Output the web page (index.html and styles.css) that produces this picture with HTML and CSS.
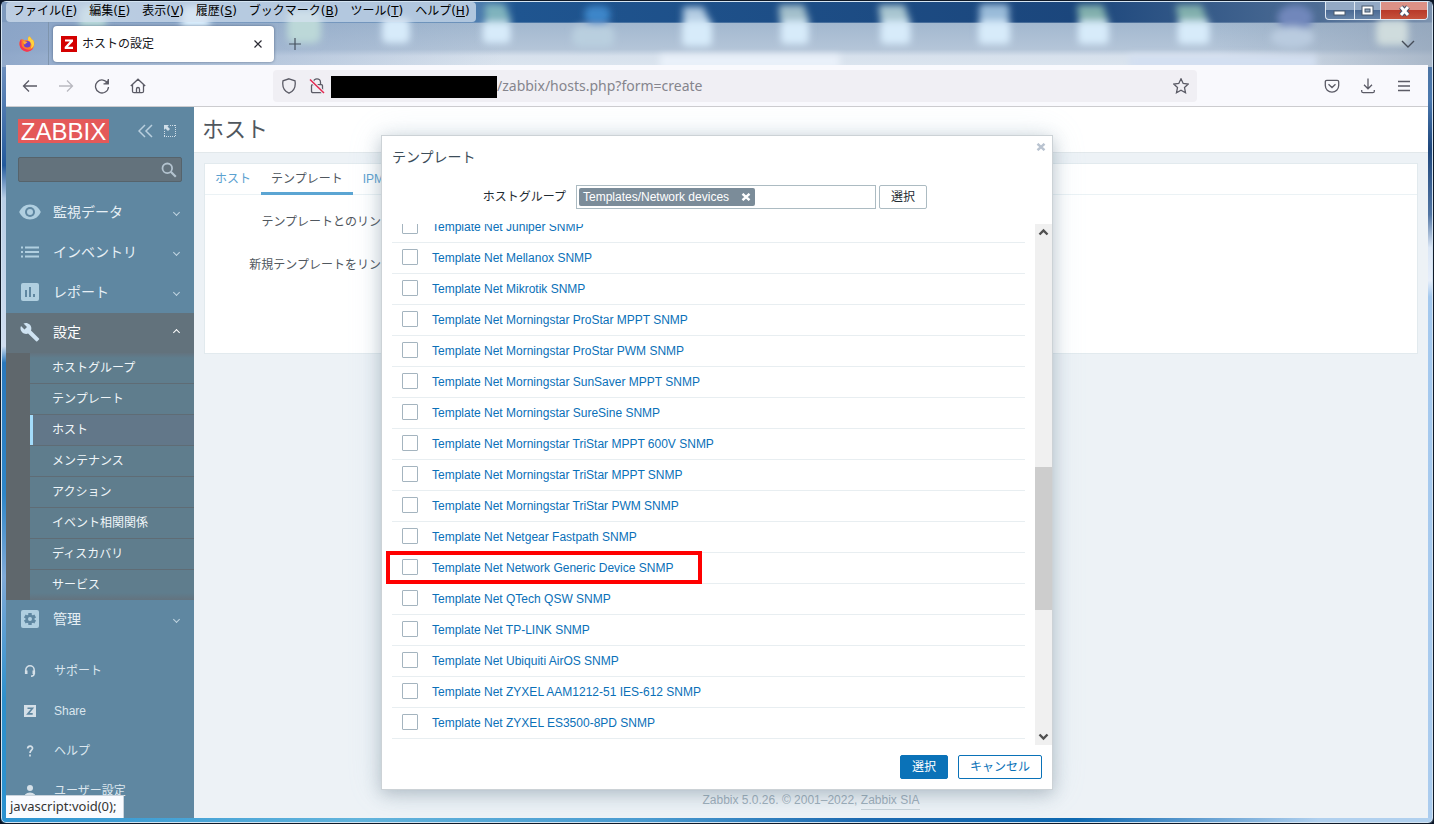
FILE: index.html
```html
<!DOCTYPE html>
<html lang="ja">
<head>
<meta charset="utf-8">
<title>ホストの設定</title>
<link rel="stylesheet" href="styles.css">
</head>
<body>
<div class="window">
  <svg class="wallpaper" viewBox="0 0 1434 66" preserveAspectRatio="none" aria-hidden="true">
    <defs>
      <filter id="soft" x="-50%" y="-50%" width="200%" height="200%"><feGaussianBlur stdDeviation="4"/></filter>
      <linearGradient id="sky" x1="0" x2="1"><stop offset="0" stop-color="#7d99bd"/><stop offset=".33" stop-color="#4f7eb0"/><stop offset=".36" stop-color="#1f5590"/><stop offset=".75" stop-color="#1b467c"/><stop offset=".92" stop-color="#4d6c94"/><stop offset="1" stop-color="#7c92ae"/></linearGradient>
      <linearGradient id="veil" x1="0" x2="0" y1="0" y2="1"><stop offset="0" stop-color="#a2b8cf"/><stop offset=".6" stop-color="#b4c5d8"/><stop offset=".75" stop-color="#d6e0ec"/><stop offset="1" stop-color="#dce5ef"/></linearGradient>
      <linearGradient id="edge" x1="0" x2="1"><stop offset="0" stop-color="#88a2c6" stop-opacity=".9"/><stop offset=".35" stop-color="#88a2c6" stop-opacity="0"/><stop offset=".85" stop-color="#8c9db2" stop-opacity="0"/><stop offset="1" stop-color="#8c9db2" stop-opacity=".6"/></linearGradient>
    </defs>
    <rect width="1434" height="66" fill="url(#sky)"/>
    <rect y="21" width="1434" height="45" fill="url(#veil)"/>
    <rect y="21" width="1434" height="45" fill="url(#edge)"/>
    <g filter="url(#soft)" fill="#d7ebfa">
      <rect x="78" y="4" width="26" height="34" rx="8" fill="#b5d5d8"/><rect x="180" y="4" width="28" height="36" rx="8"/><rect x="286" y="8" width="34" height="34" rx="8" fill="#bcd8d8"/><rect x="381" y="16" width="28" height="26" rx="6"/>
      <path d="M484 2h20l7 18h-27z" fill="#7fb3bd"/><rect x="482" y="20" width="28" height="22" rx="5"/>
      <rect x="584" y="4" width="26" height="18" rx="8" fill="#3d86c9"/><rect x="572" y="24" width="42" height="22" rx="8" fill="#b9cfdf"/>
      <path d="M683 5h20l8 17h-28z" fill="#b3cce2"/><rect x="682" y="19" width="30" height="26" rx="5"/>
      <path d="M779 3h25l6 18h-30z" fill="#a3bfcb"/><rect x="781" y="19" width="28" height="24" rx="5"/>
      <path d="M879 3h26l6 18h-30z" fill="#a9c6d0"/><rect x="881" y="19" width="30" height="24" rx="5"/>
      <rect x="980" y="2" width="30" height="20" rx="4" fill="#9abbd9"/><rect x="979" y="19" width="32" height="24" rx="5"/>
      <path d="M1078 3h26l6 18h-30z" fill="#82b0ad"/><rect x="1079" y="19" width="31" height="24" rx="5"/>
      <path d="M1177 3h26l7 18h-30z" fill="#82b0ad"/><rect x="1179" y="19" width="32" height="24" rx="5"/>
      <ellipse cx="1297" cy="16" rx="18" ry="13" fill="#7187bb"/><ellipse cx="1294" cy="36" rx="22" ry="11" fill="#b9cbdf"/>
      <rect x="1378" y="18" width="32" height="26" rx="6" fill="#cfdcdd"/>
      <rect x="660" y="54" width="180" height="14" fill="#eaf1fa"/><rect x="1130" y="54" width="188" height="14" fill="#d3dff1"/>
    </g>
  </svg>

  <div class="titlebar">
    <nav class="menubar" aria-label="メニュー">
      <a href="#">ファイル(<u>F</u>)</a><a href="#">編集(<u>E</u>)</a><a href="#">表示(<u>V</u>)</a><a href="#">履歴(<u>S</u>)</a><a href="#">ブックマーク(<u>B</u>)</a><a href="#">ツール(<u>T</u>)</a><a href="#">ヘルプ(<u>H</u>)</a>
    </nav>
    <div class="winctl">
      <button aria-label="最小化"><svg width="28" height="18"><rect x="8" y="9" width="11" height="4" fill="#fff" stroke="#4a5a6c"/></svg></button>
      <button aria-label="最大化"><svg width="25" height="18"><rect x="7" y="4" width="11" height="9" fill="#fff" stroke="#44566b"/><rect x="10" y="7" width="5" height="3" fill="#8fa4bc" stroke="#44566b"/></svg></button>
      <button class="winclose" aria-label="閉じる"><svg width="46" height="18"><path d="M20 5l7 8m0-8l-7 8" stroke="#45526a" stroke-width="5"/><path d="M20 5l7 8m0-8l-7 8" stroke="#fff" stroke-width="3"/></svg></button>
    </div>
  </div>

  <div class="tabstrip">
    <button class="pinned" aria-label="Firefox">
      <svg width="16" height="16" viewBox="0 0 16 16"><path d="M10 .3c1.700 1 2.600 2.300 3 3.700l.8-.4c1 1.400 1.700 3 1.500 5A7.500 7.500 0 0 1 8 15.700 7.500 7.500 0 0 1 .5 8.500C.4 6 1.200 4 2.300 3l.3 1.200L4 2.700c.3 1 .8 1.500 1.700 1.700 1.200-.9 3.100-.4 3.600.4C8.700 3 9 1.500 10 .3z" fill="#ff7a2a"/><path d="M10 .3c1.700 1 2.600 2.300 3 3.700l.8-.4c1 1.400 1.600 3.600 1.100 5.600-.6 1.700-1.700 2.800-3.200 3.300 1.700-3.200.5-6.400-2.400-7.700C8.700 3 9 1.500 10 .3z" fill="#ffd43c"/><path d="M.5 8.500A7.500 7.500 0 0 0 8 15.700c3 0 5.500-1.700 6.600-4.100-2 2.400-5.600 2.900-8 1.500C3.500 12 2 9.600 2.600 5.500L2.300 3C1 4.200.4 6 .5 8.500z" fill="#f0365a"/><circle cx="8.200" cy="8.300" r="3.300" fill="#6b3fd0"/><path d="M4 5.500c1.500-.6 2.500 0 4.500.4-.3 1-1.800 1-2 1.800-.2 1.300-1 1-1.500.1z" fill="#ffad33"/></svg>
    </button>
    <div class="tab">
      <svg width="16" height="16"><rect width="16" height="16" fill="#d40000"/><path d="M4 3.500h8v2L7 10.800h5v2.200H3.700v-2L8.800 5.600H4z" fill="#fff"/></svg>
      <span class="tabname">ホストの設定</span>
      <button aria-label="タブを閉じる"><svg width="8" height="8"><path d="M.5.5l7 7m0-7l-7 7" stroke="#2b2a33" stroke-width="1.200"/></svg></button>
    </div>
    <button class="newtab" aria-label="新しいタブ"><svg width="12" height="12"><path d="M6 0v12M0 6h12" stroke="#45505e" stroke-width="1.200"/></svg></button>
    <button class="alltabs" aria-label="タブ一覧"><svg width="14" height="8" fill="none"><path d="M1 1l6 6 6-6" stroke="#454c58" stroke-width="1.400"/></svg></button>
  </div>

  <div class="toolbar">
    <div class="navbtns">
      <button aria-label="戻る"><svg width="16" height="16" class="ln"><path d="M15 8H2M7 2.500L1.500 8 7 13.500"/></svg></button>
      <button aria-label="進む" class="off"><svg width="16" height="16" class="ln"><path d="M1 8h13M9 2.500L14.500 8 9 13.500"/></svg></button>
      <button aria-label="再読み込み"><svg width="16" height="16" class="ln"><path d="M13.800 5.500A6.500 6.500 0 1 0 14.500 9M14.300 1v4.800H9.500"/><path d="M14.500 1.500v4.300h-4.300z" fill="#5b5b66" stroke="none"/></svg></button>
      <button aria-label="ホーム"><svg width="16" height="16" class="ln"><path d="M.8 8L8 1.200 15.200 8M2.500 6.500v6.700q0 1.500 1.500 1.500h8q1.500 0 1.500-1.500V6.500M6.500 14.500V11a1.500 1.500 0 0 1 3 0v3.500"/></svg></button>
    </div>
    <div class="urlbar">
      <svg width="16" height="16" class="ln"><path d="M8 .8l6 2c.8 4.800-.6 10-6 12.400C2.600 12.800 1.200 7.600 2 2.800z"/></svg>
      <svg width="16" height="16" class="ln"><path d="M4.500 6.500V4.300a3.500 3.500 0 0 1 7 0v2.200M3.500 6.700h9q1 0 1 1v5.600q0 1.400-1.400 1.400H3.900q-1.400 0-1.400-1.400V7.700q0-1 1-1z"/><path d="M1 1.500l14 13.500" stroke="#f0eff4" stroke-width="3.500"/><path d="M1 1.500l14 13.500" stroke="#e22850" stroke-width="1.500"/></svg>
      <span class="redacted"></span>
      <input class="url" type="text" value="/zabbix/hosts.php?form=create" aria-label="URL">
      <button aria-label="ブックマーク"><svg width="16" height="16" class="ln"><path d="M8 .8l2.200 4.700 5.100.6-3.800 3.500 1 5.100L8 12.200l-4.500 2.500 1-5.100L.7 6.100l5.100-.6z"/></svg></button>
    </div>
    <div class="tools">
      <button aria-label="Pocket"><svg width="16" height="16" class="ln"><path d="M2.800 2.300h10.400q1.500 0 1.500 1.500V7.500a6.700 6.700 0 0 1-13.400 0V3.800q0-1.500 1.500-1.500zM4.500 6.300L8 9.500l3.500-3.200"/></svg></button>
      <button aria-label="ダウンロード"><svg width="16" height="16" class="ln"><path d="M8 .5v10M4 6.800l4 4 4-4M1.700 12v1.200q0 1.500 1.500 1.500h9.600q1.500 0 1.500-1.500V12"/></svg></button>
      <button aria-label="メニュー"><svg width="16" height="16" class="ln"><path d="M2 3.500h12M2 8h12M2 12.500h12"/></svg></button>
    </div>
  </div>

  <div class="page">
    <aside class="sidebar">
      <div class="brand">
        <a class="logo" href="#">ZABBIX</a>
        <button aria-label="隠す"><svg width="15" height="14" fill="none" stroke="#b9cfde" stroke-width="1.500"><path d="M7 1L1 7l6 6M14 1L8 7l6 6"/></svg></button>
        <button aria-label="縮小"><svg width="14" height="14" fill="none" stroke="#d0dee8"><path d="M7 1.500h6M12.500 1v12M1.500 7v6M1 12.500h12" stroke-dasharray="1 1"/><path d="M1 1h5L4.500 2.500 7 5 5 7 2.500 4.500 1 6z" fill="#d0dee8" stroke="none"/></svg></button>
      </div>
      <div class="search">
        <input type="text" aria-label="検索">
        <svg width="16" height="16" fill="none" stroke="#b3c3cf" stroke-width="1.800"><circle cx="6.300" cy="6.300" r="4.800"/><path d="M9.800 9.800l5 5" stroke-width="2.200"/></svg>
      </div>
      <nav class="mainmenu">
        <a href="#"><svg width="22" height="20" viewBox="0 0 22 20"><path d="M11 2.500C6 2.500 2 5.600.2 10 2 14.400 6 17.500 11 17.500S20 14.400 21.800 10C20 5.600 16 2.500 11 2.500z" fill="#b0cfe0"/><circle cx="11" cy="10" r="5" fill="#5f87a1"/><circle cx="11" cy="10" r="3" fill="#b0cfe0"/></svg><span>監視データ</span><i class="chev"></i></a>
        <a href="#"><svg width="22" height="20"><path d="M2 5.500h2m2 0h14M2 10h2m2 0h14M2 14.500h2m2 0h14" stroke="#b0cfe0" stroke-width="2"/></svg><span>インベントリ</span><i class="chev"></i></a>
        <a href="#"><svg width="22" height="20"><rect x="2" y="1" width="18" height="18" rx="2" fill="#b0cfe0"/><path d="M7 8v7M11 5v10M15 12v3" stroke="#5f87a1" stroke-width="2"/></svg><span>レポート</span><i class="chev"></i></a>
        <a href="#" class="open"><svg width="22" height="20"><path d="M20 16.500l-8-8c.8-2 .3-4.400-1.300-6C9 .8 6.500.500 4.500 1.400L8 4.900 5.500 7.400 2 4C1 6 1.400 8.500 3.100 10.200c1.600 1.600 4 2.100 6 1.300l8 7.700q.6.500 1.200 0l1.700-1.700q.5-.5 0-1z" fill="#cfe3f2"/></svg><span>設定</span><i class="chev up"></i></a>
      </nav>
      <nav class="submenu">
        <a href="#">ホストグループ</a><a href="#">テンプレート</a><a href="#" class="current">ホスト</a><a href="#">メンテナンス</a><a href="#">アクション</a><a href="#">イベント相関関係</a><a href="#">ディスカバリ</a><a href="#">サービス</a>
      </nav>
      <nav class="mainmenu">
        <a href="#"><svg width="22" height="20"><rect x="2" y="1" width="18" height="18" rx="2" fill="#b0cfe0"/><path d="M11 4v12M5.800 7l10.400 6M5.800 13l10.400-6" stroke="#5f87a1" stroke-width="3.400"/><circle cx="11" cy="10" r="4.500" fill="#5f87a1"/><circle cx="11" cy="10" r="2" fill="#b0cfe0"/></svg><span>管理</span><i class="chev"></i></a>
      </nav>
      <nav class="usermenu">
        <a href="#"><svg width="12" height="12" fill="none" stroke="#d5e0e8" stroke-width="1.500"><path d="M1.800 6V5a4.200 4.200 0 0 1 8.400 0v3.500q0 2.500-3.200 2.700"/><path d="M2.200 5.500v3.500M9.800 5.500v3.500" stroke-width="2.600"/></svg><span>サポート</span></a>
        <a href="#"><svg width="12" height="12"><rect width="12" height="12" fill="#d5e0e8"/><path d="M3.500 3.200h5L3.800 8.900h4.900" fill="none" stroke="#5f87a1" stroke-width="1.600"/></svg><span>Share</span></a>
        <a href="#"><svg width="12" height="12" fill="none" stroke="#d5e0e8" stroke-width="1.700"><path d="M3.600 3.500C4 .2 8.800.5 8.500 3.500 8.300 5 6 5.500 6 8M6 9.500v2"/></svg><span>ヘルプ</span></a>
        <a href="#"><svg width="12" height="12" fill="#d5e0e8"><circle cx="6" cy="3" r="3"/><path d="M1 12V9.500q2-2 5-2t5 2V12z"/></svg><span>ユーザー設定</span></a>
      </nav>
    </aside>

    <main class="main">
      <h1>ホスト</h1>
      <section class="card">
        <div class="tabs"><a href="#">ホスト</a><a href="#" class="sel">テンプレート</a><a href="#">IPMI</a></div>
        <div class="formrow">テンプレートとのリンク</div>
        <div class="formrow">新規テンプレートをリンク</div>
      </section>
      <footer>Zabbix 5.0.26. © 2001–2022, <a href="#">Zabbix SIA</a></footer>
    </main>

    <div class="overlay">
      <section class="dialog" role="dialog" aria-labelledby="dlg">
        <header>
          <h2 id="dlg">テンプレート</h2>
          <button class="x" aria-label="閉じる"><svg width="10" height="8"><path d="M1.500.8l7 6.400m0-6.400l-7 6.400" stroke="#b9c3d0" stroke-width="2.400"/></svg></button>
        </header>
        <div class="filter">
          <label for="grp">ホストグループ</label>
          <div class="multi"><span class="tag">Templates/Network devices<button aria-label="削除"><svg width="10" height="8"><path d="M1.500.8l7 6.400m0-6.400l-7 6.400" stroke="#fff" stroke-width="2.400"/></svg></button></span><input id="grp" type="text"></div>
          <button class="btn">選択</button>
        </div>
        <div class="scroller">
          <div class="list">
            <table>
              <tr><td><input type="checkbox" id="t1"></td><td><label for="t1">Template Net Juniper SNMP</label></td></tr>
              <tr><td><input type="checkbox" id="t2"></td><td><label for="t2">Template Net Mellanox SNMP</label></td></tr>
              <tr><td><input type="checkbox" id="t3"></td><td><label for="t3">Template Net Mikrotik SNMP</label></td></tr>
              <tr><td><input type="checkbox" id="t4"></td><td><label for="t4">Template Net Morningstar ProStar MPPT SNMP</label></td></tr>
              <tr><td><input type="checkbox" id="t5"></td><td><label for="t5">Template Net Morningstar ProStar PWM SNMP</label></td></tr>
              <tr><td><input type="checkbox" id="t6"></td><td><label for="t6">Template Net Morningstar SunSaver MPPT SNMP</label></td></tr>
              <tr><td><input type="checkbox" id="t7"></td><td><label for="t7">Template Net Morningstar SureSine SNMP</label></td></tr>
              <tr><td><input type="checkbox" id="t8"></td><td><label for="t8">Template Net Morningstar TriStar MPPT 600V SNMP</label></td></tr>
              <tr><td><input type="checkbox" id="t9"></td><td><label for="t9">Template Net Morningstar TriStar MPPT SNMP</label></td></tr>
              <tr><td><input type="checkbox" id="t10"></td><td><label for="t10">Template Net Morningstar TriStar PWM SNMP</label></td></tr>
              <tr><td><input type="checkbox" id="t11"></td><td><label for="t11">Template Net Netgear Fastpath SNMP</label></td></tr>
              <tr class="marked"><td><input type="checkbox" id="t12"></td><td><label for="t12">Template Net Network Generic Device SNMP</label></td></tr>
              <tr><td><input type="checkbox" id="t13"></td><td><label for="t13">Template Net QTech QSW SNMP</label></td></tr>
              <tr><td><input type="checkbox" id="t14"></td><td><label for="t14">Template Net TP-LINK SNMP</label></td></tr>
              <tr><td><input type="checkbox" id="t15"></td><td><label for="t15">Template Net Ubiquiti AirOS SNMP</label></td></tr>
              <tr><td><input type="checkbox" id="t16"></td><td><label for="t16">Template Net ZYXEL AAM1212-51 IES-612 SNMP</label></td></tr>
              <tr><td><input type="checkbox" id="t17"></td><td><label for="t17">Template Net ZYXEL ES3500-8PD SNMP</label></td></tr>
            </table>
          </div>
          <div class="scrollbar" aria-hidden="true">
            <svg width="17" height="17" fill="none" stroke="#505050" stroke-width="2.400"><path d="M4.500 10.500l4-4 4 4"/></svg>
            <div class="track"><div class="before"></div><div class="thumb"></div><div class="after"></div></div>
            <svg width="17" height="17" fill="none" stroke="#505050" stroke-width="2.400"><path d="M4.500 6.500l4 4 4-4"/></svg>
          </div>
        </div>
        <div class="actions"><button class="btn primary">選択</button><button class="btn link">キャンセル</button></div>
      </section>
    </div>
    <div class="status">javascript:void(0);</div>
  </div>
</div>
</body>
</html>
```
FILE: styles.css
```css
*, *::before, *::after { box-sizing: border-box; }
body {
  margin: 0;
  background: #0a1526;
  font: 12px/16px "Liberation Sans", "Noto Sans CJK JP", sans-serif;
}
a { color: inherit; text-decoration: none; }
button {
  display: flex; align-items: center; justify-content: center;
  margin: 0; padding: 0; border: 0; background: none;
  color: inherit; font: inherit;
}
svg { display: block; flex: none; }
.ln { fill: none; stroke: #5b5b66; stroke-width: 1.3; }

.window {
  position: relative;
  display: flex; flex-direction: column;
  height: 100vh;
  padding: 1px 5px 5px;
  overflow: hidden;
  border: 1px solid #101a28;
  border-radius: 6px;
  background:
    linear-gradient(90deg, #2b92d0, #62b4dc 25%, #4a9bd0 45%, #1d6ab0 60%, #0d68b0 75%, #b0d0ee 92%) bottom / 100% 5px no-repeat,
    linear-gradient(#5f80b0, #6c8ebd 8%, #235a9c 20%, #b9cfe6 24%, #d0def0 42%, #2a78bc 44%, #2e86c8 60%, #80aad8 70%, #2e90cc 85%, #2b92d0) left / 6px 100% no-repeat,
    linear-gradient(#506c90, #4a78ae 12%, #1f477c 18%, #5276a4 26%, #dbe7f6 30%, #e6eefa 34%, #a3c8ee 36%, #abccee) right / 6px 100% no-repeat;
  box-shadow: inset 0 0 0 1px #d4e4f2;
}
.wallpaper { position: absolute; top: 1px; left: 1px; width: calc(100% - 2px); height: 65px; }

.titlebar { position: relative; display: flex; justify-content: space-between; height: 20px; }
.menubar {
  display: flex; gap: 12px;
  height: 20px; padding: 0 6px 0 7px;
  border-radius: 4px;
  background: rgba(214, 226, 240, .72);
  color: #000;
  font-family: "DejaVu Sans", "Noto Sans CJK JP", sans-serif;
  font-family: "Noto Sans CJK JP", "DejaVu Sans", sans-serif;
  line-height: 18px;
}
.menubar { font-family: "DejaVu Sans", "Noto Sans CJK JP", sans-serif; }
.winctl {
  display: flex; height: 18px;
  border: 1px solid #dfe8f2; border-top: 0;
  border-radius: 0 0 4px 4px;
  background: linear-gradient(#93a9c4 45%, #4b6a94 50%, #6684a8);
  overflow: hidden;
}
.winctl button + button { border-left: 1px solid #dfe8f2; }
.winctl .winclose { background: linear-gradient(#dc9186 45%, #b93a2a 50%, #c5523c); }

.tabstrip { position: relative; display: flex; align-items: center; flex: none; height: 43px; }
.pinned { width: 43px; height: 43px; border-right: 1px solid #7e94ad; }
.tab {
  display: flex; align-items: center; gap: 5px;
  width: 221px; height: 36px; margin-left: 4px; padding: 0 12px 0 8px;
  border-radius: 4px; background: #fff; color: #15141a;
  box-shadow: 0 0 3px rgba(40, 60, 90, .6);
}
.tabname { flex: 1; }
.newtab { margin-left: 15px; }
.alltabs { margin: 0 13px 0 auto; }

.toolbar {
  position: relative;
  display: flex; align-items: center; flex: none;
  height: 42px; padding: 0 16px;
  border-bottom: 1px solid #cccccf;
  background: #f9f9fd;
}
.navbtns, .tools { display: flex; gap: 20px; }
.off { opacity: .4; }
.urlbar {
  display: flex; align-items: center; flex: 1; gap: 12px;
  height: 32px; margin: 0 127px 0 127px; padding: 0 8px;
  border-radius: 4px; background: #f0eff4;
}
.redacted { width: 166px; height: 22px; margin: 2px -12px 0 -6px; background: #000; }
.urlbar .url {
  flex: 1; min-width: 0; padding: 0; border: 0; background: none;
  color: #85858d; font: 14px/20px "Noto Sans", "Noto Sans CJK JP", sans-serif;
}

.page { position: relative; display: flex; flex: 1; min-height: 0; overflow: hidden; background: #edf2f6; }

.sidebar { flex: none; width: 188px; overflow: hidden; background: #5f87a1; color: #e6eff5; }
.brand { display: flex; align-items: center; gap: 10px; padding: 12px 17px 0 12px; }
.logo {
  width: 91px; height: 24px; margin-right: auto;
  background: #e45959; color: #fff;
  font-size: 24px; line-height: 25px; text-align: center;
}
.search {
  display: flex; align-items: center;
  height: 25px; margin: 14px 12px 11px; padding-right: 4px;
  border: 1px solid #56636b; border-radius: 2px; background: #63727c;
}
.search input { flex: 1; min-width: 0; border: 0; background: none; color: #fff; }
.mainmenu a { display: flex; align-items: center; gap: 12px; height: 40px; padding: 0 14px 2px 13px; font-size: 14px; }
.mainmenu a span { flex: 1; }
.mainmenu .open { background: #62727c; color: #fff; }
.chev { width: 5px; height: 5px; margin-right: 1px; border: solid #c0d4e0; border-width: 0 1px 1px 0; transform: rotate(45deg); }
.chev.up { border-color: #fff; transform: rotate(225deg); }
.submenu { border-left: 24px solid #5f676c; background: linear-gradient(#63737f, #5f7d8d 5px, #5f7d8d 240px, #63737f); }
.submenu a { display: block; height: 31px; padding-left: 22px; border-bottom: 1px solid #5f6c75; color: #f0f6f9; line-height: 30px; }
.submenu a:last-child { height: 30px; border: 0; }
.submenu .current { padding-left: 19px; background: #627789; box-shadow: inset 3px 0 #a3dcfb; padding-left: 22px; }
.usermenu { padding-top: 11px; }
.usermenu a { display: flex; align-items: center; gap: 18px; height: 40px; padding-left: 18px; color: #dbe6ee; }

.main { position: relative; flex: 1; min-width: 0; }
.main h1 {
  height: 46px; margin: 0; padding: 0 8px;
  border-bottom: 1px solid #e2e8eb; background: #fff;
  color: #50575e; font-size: 22px; font-weight: 400; line-height: 46px;
}
.card { height: 191px; margin: 10px; border: 1px solid #e2eaee; background: #fff; }
.tabs { display: flex; height: 31px; margin-bottom: 11px; border-bottom: 1px solid #ebf2f5; }
.tabs a { height: 31px; padding: 0 10px; color: #5ba1d0; line-height: 30px; }
.tabs .sel { border-bottom: 3px solid #5ba5d3; color: #50575e; }
.formrow { width: 188px; margin-bottom: 11px; color: #50575e; line-height: 32px; text-align: right; }
.main footer { position: absolute; right: 0; bottom: 8px; left: 0; color: #9dadb9; line-height: 17px; text-align: center; }
.main footer a { display: inline-block; border-bottom: 1px solid #c8d2d9; }

.overlay { position: absolute; inset: 28px 0; display: flex; justify-content: center; }
.dialog {
  display: flex; flex-direction: column;
  width: 672px; border: 1px solid #ccd2d6; background: #fff; color: #1f2c33;
  box-shadow: 0 4px 16px rgba(60, 80, 95, .3), 0 0 32px rgba(150, 190, 215, .2);
}
.dialog header { display: flex; justify-content: space-between; padding: 7px 6px 0 10px; }
.dialog h2 { margin: 0; color: #3c4d5a; font-size: 14px; font-weight: 400; line-height: 28px; }
.x { width: 10px; height: 8px; }
.filter { display: flex; align-items: center; padding: 14px 10px 15px; }
.filter > label { width: 174px; margin-right: 10px; text-align: right; }
.multi { display: flex; align-items: center; width: 300px; height: 24px; margin-right: 3px; padding: 2px; border: 1px solid #acbbc2; }
.multi input { flex: 1; min-width: 0; border: 0; padding: 0; background: none; }
.tag { display: flex; align-items: center; gap: 12px; height: 18px; padding: 0 4px; border-radius: 2px; background: #7b8c99; color: #fff; }
.btn { height: 24px; padding: 0 11px; border: 1px solid #acbbc2; border-radius: 2px; }
.scroller { display: flex; flex: 1; min-height: 0; }
.list { display: flex; flex: 1; align-items: flex-end; min-width: 0; padding: 0 10px 6px; overflow: hidden; }
.list table { width: 100%; border-collapse: collapse; }
.list tr { position: relative; }
.list td { height: 31px; padding: 0; border-bottom: 1px solid #e8eef1; }
.list td:first-child { width: 40px; padding: 0 0 2px 10px; }
.list label { color: #0a70b8; }
.list input { display: block; appearance: none; width: 16px; height: 16px; margin: 0; border: 1px solid #a4b4bf; border-radius: 1px; background: #fff; }
.marked::after { content: ""; position: absolute; top: -2px; left: -6px; width: 316px; height: 33px; border: 4px solid #f00; pointer-events: none; }
.scrollbar { display: flex; flex-direction: column; width: 17px; background: #f0f0f0; }
.track { display: flex; flex: 1; flex-direction: column; }
.before { flex: 226; }
.thumb { flex: 143; background: #cdcdcd; }
.after { flex: 118; }
.actions { display: flex; justify-content: flex-end; gap: 10px; padding: 10px; }
.primary { border-color: #0a72b8; background: #0a72b8; color: #fff; }
.link { border-color: #0a72b8; color: #0a72b8; }

.status {
  position: absolute; bottom: 0; left: 0;
  width: 118px; height: 23px; padding-left: 4px;
  border: solid #c9d3dc; border-width: 1px 1px 0 0;
  background: #f9fbff; color: #333;
  font: 13px/21px "Noto Sans", sans-serif;
}
```
